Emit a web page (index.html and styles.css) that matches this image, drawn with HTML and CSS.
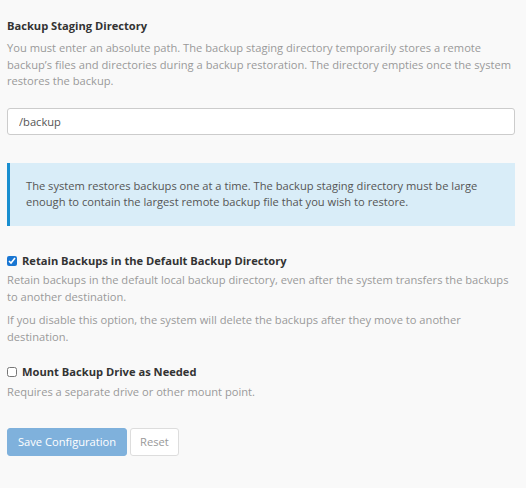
FILE: index.html
```html
<!DOCTYPE html>
<html>
<head>
<meta charset="utf-8">
<link rel="stylesheet" href="styles.css">
</head>
<body>
<div class="page">
  <section class="field">
    <h3 class="field-title">Backup Staging Directory</h3>
    <p class="help">You must enter an absolute path. The backup staging directory temporarily stores a remote backup’s files and directories during a backup restoration. The directory empties once the system restores the backup.</p>
    <input class="text-input" type="text" value="/backup">
  </section>

  <div class="alert">The system restores backups one at a time. The backup staging directory must be large enough to contain the largest remote backup file that you wish to restore.</div>

  <section class="field">
    <label class="check-label"><input type="checkbox" class="check" checked> Retain Backups in the Default Backup Directory</label>
    <p class="help">Retain backups in the default local backup directory, even after the system transfers the backups to another destination.</p>
    <p class="help">If you disable this option, the system will delete the backups after they move to another destination.</p>
  </section>

  <section class="field">
    <label class="check-label"><input type="checkbox" class="check"> Mount Backup Drive as Needed</label>
    <p class="help">Requires a separate drive or other mount point.</p>
  </section>

  <div class="actions">
    <button class="btn btn-primary" type="button">Save Configuration</button>
    <button class="btn btn-default" type="button">Reset</button>
  </div>
</div>
</body>
</html>
```
FILE: styles.css
```css
html, body {
  margin: 0;
  padding: 0;
  background: #f9f9f9;
}
body {
  font-family: "Open Sans", "Liberation Sans", sans-serif;
  font-size: 11.15px;
  line-height: 16.5px;
  color: #333;
}
.page {
  padding: 17px 11px 0 7px;
}
.field-title {
  margin: 0 0 6px;
  font-size: 11.15px;
  font-weight: 700;
  line-height: 17px;
  color: #333;
}
.help {
  margin: 0 0 7px;
  color: #999;
}
.text-input {
  display: block;
  box-sizing: border-box;
  width: 100%;
  height: 27px;
  margin-top: 18px;
  padding: 0 11px;
  border: 1px solid #ccc;
  border-radius: 3px;
  background: #fff;
  font: inherit;
  color: #555;
}
.alert {
  margin-top: 28px;
  padding: 15px 18px 15px 16px;
  border-left: 3px solid #1a8fd0;
  background: #d9edf8;
  color: #555;
}
.field + .field {
  margin-top: 19px;
}
.alert + .field {
  margin-top: 27px;
}
.check-label {
  display: flex;
  align-items: center;
  gap: 5px;
  font-weight: 700;
  font-size: 11.15px;
  color: #333;
  margin-bottom: 3px;
}
.check {
  margin: 0;
  width: 10px;
  height: 10px;
  accent-color: #1976d2;
}
.actions {
  margin-top: 28px;
  display: flex;
  gap: 3px;
}
.btn {
  font: inherit;
  height: 28px;
  border-radius: 3px;
  padding: 0 10px;
  cursor: pointer;
}
.btn-primary {
  background: #7fb1dc;
  border: 1px solid #7fb1dc;
  color: #fff;
}
.btn-default {
  background: #fff;
  border: 1px solid #ddd;
  color: #999;
  padding: 0 9px;
}
```
